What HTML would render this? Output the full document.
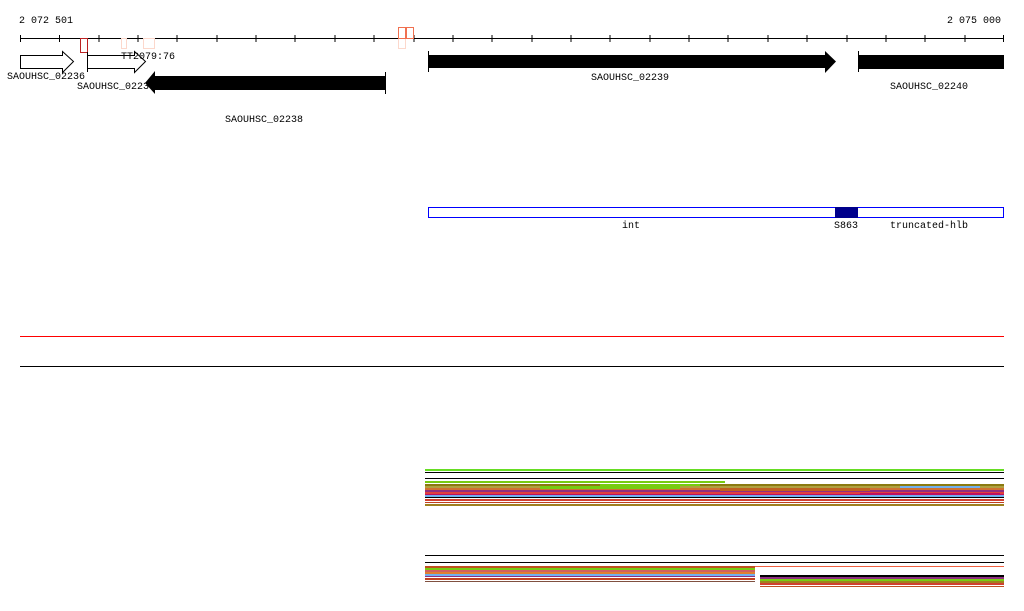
<!DOCTYPE html>
<html><head><meta charset="utf-8"><style>
html,body{margin:0;padding:0;background:#fff;}
svg{display:block}
text{font-family:"Liberation Mono","DejaVu Sans Mono",monospace;font-size:10px;fill:#000}
</style></head><body>
<svg width="1024" height="611" viewBox="0 0 1024 611" xmlns="http://www.w3.org/2000/svg">
<text x="19" y="23">2 072 501</text>
<text x="947" y="23">2 075 000</text>
<line x1="20" y1="38.5" x2="1004" y2="38.5" stroke="#000"/>
<g stroke="#000">
<line x1="20.5" y1="35" x2="20.5" y2="42"/><line x1="59.5" y1="35" x2="59.5" y2="42"/><line x1="99" y1="35" x2="99" y2="42"/><line x1="138" y1="35" x2="138" y2="42"/><line x1="177" y1="35" x2="177" y2="42"/><line x1="217" y1="35" x2="217" y2="42"/><line x1="256" y1="35" x2="256" y2="42"/><line x1="295" y1="35" x2="295" y2="42"/><line x1="335" y1="35" x2="335" y2="42"/><line x1="374" y1="35" x2="374" y2="42"/><line x1="414" y1="35" x2="414" y2="42"/><line x1="453" y1="35" x2="453" y2="42"/><line x1="492" y1="35" x2="492" y2="42"/><line x1="532" y1="35" x2="532" y2="42"/><line x1="571" y1="35" x2="571" y2="42"/><line x1="610" y1="35" x2="610" y2="42"/><line x1="650" y1="35" x2="650" y2="42"/><line x1="689" y1="35" x2="689" y2="42"/><line x1="728" y1="35" x2="728" y2="42"/><line x1="768" y1="35" x2="768" y2="42"/><line x1="807" y1="35" x2="807" y2="42"/><line x1="847" y1="35" x2="847" y2="42"/><line x1="886" y1="35" x2="886" y2="42"/><line x1="925" y1="35" x2="925" y2="42"/><line x1="965" y1="35" x2="965" y2="42"/><line x1="1003.5" y1="35" x2="1003.5" y2="42"/>
</g>
<rect x="80.5" y="38.5" width="7" height="14" fill="none" stroke="#b22"/>
<rect x="121.5" y="38.5" width="5" height="10" fill="none" stroke="#fcd8cc"/>
<rect x="143.5" y="38.5" width="11" height="10" fill="none" stroke="#fcd8cc"/>
<rect x="398.5" y="38.5" width="7" height="10" fill="none" stroke="#fcd8cc"/>
<rect x="398.5" y="27.5" width="7" height="11" fill="none" stroke="#f07050"/>
<rect x="406.5" y="27.5" width="7" height="11" fill="none" stroke="#f07050"/>
<path d="M20.5 55.5H62.5V51.5L73.5 61.5L62.5 72.5V68.5H20.5Z" fill="#fff" stroke="#000"/>
<line x1="87.5" y1="52" x2="87.5" y2="72" stroke="#000"/>
<path d="M87.5 55.5H134.5V51.5L145.5 61.5L134.5 72.5V68.5H87.5Z" fill="#fff" stroke="#000"/>
<text x="7" y="79">SAOUHSC_02236</text>
<text x="121" y="59">TT2079:76</text>
<text x="77" y="89">SAOUHSC_0223</text>
<path d="M385 76H155V71L145 83L155 94V90H385Z" fill="#000"/>
<line x1="385.5" y1="72" x2="385.5" y2="94" stroke="#000"/>
<text x="225" y="122">SAOUHSC_02238</text>
<line x1="428.5" y1="51" x2="428.5" y2="72" stroke="#000"/>
<path d="M428 55H825V51L836 61.5L825 73V68H428Z" fill="#000"/>
<text x="591" y="80">SAOUHSC_02239</text>
<line x1="858.5" y1="51" x2="858.5" y2="72" stroke="#000"/>
<rect x="858" y="55" width="146" height="14" fill="#000"/>
<text x="890" y="89">SAOUHSC_02240</text>
<rect x="428.5" y="207.5" width="575" height="10" fill="#fff" stroke="#00f"/>
<rect x="835" y="207" width="23" height="11" fill="#00008b"/>
<text x="622" y="228">int</text>
<text x="834" y="228">S863</text>
<text x="890" y="228">truncated-hlb</text>
<line x1="20" y1="336.5" x2="1004" y2="336.5" stroke="#f00"/>
<line x1="20" y1="366.5" x2="1004" y2="366.5" stroke="#000"/>
<g>
<rect x="425" y="469" width="579" height="2" fill="#6d2"/>
<rect x="425" y="472" width="579" height="1" fill="#000"/>
<rect x="425" y="478" width="579" height="1" fill="#000"/>
<rect x="425" y="481" width="300" height="2" fill="#7c1"/>
<rect x="425" y="484" width="579" height="2" fill="#8a7a10"/>
<rect x="425" y="486" width="579" height="2" fill="#b0a040"/>
<rect x="425" y="488" width="579" height="2" fill="#d07030"/>
<rect x="425" y="490" width="579" height="2" fill="#903080"/>
<rect x="425" y="492" width="579" height="2" fill="#e04040"/>
<rect x="425" y="494" width="579" height="1" fill="#c01060"/>
<rect x="425" y="495" width="579" height="2" fill="#70b0f0"/>
<rect x="425" y="497" width="579" height="1" fill="#000"/>
<rect x="425" y="499" width="579" height="2" fill="#d04030"/>
<rect x="425" y="502" width="579" height="1" fill="#c04020"/>
<rect x="425" y="504" width="579" height="2" fill="#a08020"/>
<rect x="540" y="486" width="140" height="3" fill="#7c1"/>
<rect x="720" y="488" width="150" height="3" fill="#c06020"/>
<rect x="860" y="493" width="140" height="2" fill="#c01060"/>
<rect x="600" y="484" width="100" height="2" fill="#7c1"/>
<rect x="900" y="486" width="80" height="2" fill="#70b0f0"/>
</g>
<g>
<rect x="425" y="555" width="579" height="1" fill="#000"/>
<rect x="425" y="562" width="579" height="1" fill="#000"/>
<rect x="425" y="566" width="330" height="2" fill="#c05020"/>
<rect x="425" y="568" width="330" height="2" fill="#7c1"/>
<rect x="425" y="570" width="330" height="2" fill="#d06060"/>
<rect x="425" y="572" width="330" height="2" fill="#e08030"/>
<rect x="425" y="574" width="330" height="2" fill="#70b0f0"/>
<rect x="425" y="576" width="330" height="1" fill="#903080"/>
<rect x="425" y="578" width="330" height="2" fill="#c04020"/>
<rect x="425" y="581" width="330" height="1" fill="#805040"/>
<rect x="755" y="566" width="249" height="1" fill="#f06040"/>
<rect x="760" y="575" width="244" height="2" fill="#000"/>
<rect x="760" y="577" width="244" height="2" fill="#903080"/>
<rect x="760" y="579" width="244" height="2" fill="#7c1"/>
<rect x="760" y="581" width="244" height="2" fill="#a08020"/>
<rect x="760" y="583" width="244" height="2" fill="#d04030"/>
<rect x="760" y="586" width="244" height="1" fill="#c05020"/>
</g>
</svg>
</body></html>
